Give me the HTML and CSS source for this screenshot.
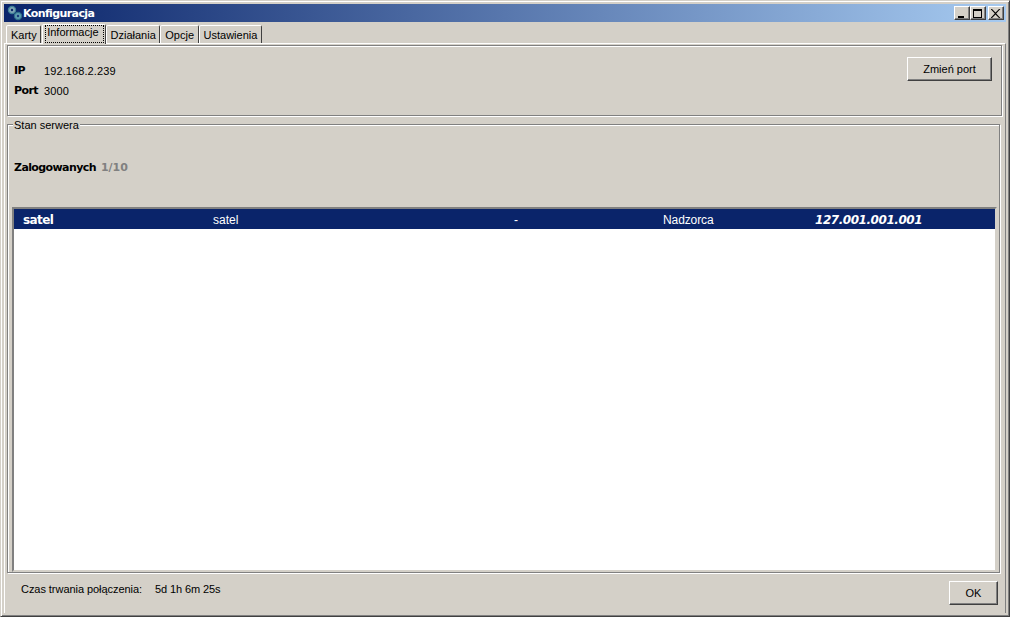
FILE: index.html
```html
<!DOCTYPE html>
<html lang="pl">
<head>
<meta charset="utf-8">
<title>Konfiguracja</title>
<link rel="stylesheet" href="styles.css">
</head>
<body>
<div class="window">
  <header class="titlebar">
    <svg class="appicon" width="16" height="16" viewBox="0 0 16 16">
      <circle cx="5" cy="5" r="3.6" fill="#7fa6b4" stroke="#3f7f96" stroke-width="1.2"/>
      <circle cx="5" cy="5" r="1.2" fill="#0a246a"/>
      <circle cx="11" cy="11" r="3.6" fill="#5d9db0" stroke="#2f6f8a" stroke-width="1.2"/>
      <circle cx="11" cy="11" r="1.2" fill="#1a3a7a"/>
    </svg>
    <span class="title">Konfiguracja</span>
    <div class="winbtns">
      <span class="winbtn"><svg width="10" height="9" viewBox="0 0 10 9"><rect x="1" y="7" width="6" height="2" fill="#000"/></svg></span>
      <span class="winbtn"><svg width="10" height="9" viewBox="0 0 10 9"><path d="M0 0h9v9H0zM1 2v6h7V2z" fill="#000" fill-rule="evenodd"/></svg></span>
      <span class="winbtn close"><svg width="10" height="9" viewBox="0 0 10 9"><path d="M1 0l3.5 3.5L8 0h1.4L5.2 4.5 9.4 9H8L4.5 5.5 1 9H-.4l4.2-4.5L-.4 0z" fill="#000"/></svg></span>
    </div>
  </header>
  <nav class="tabs">
    <span class="tab">Karty</span>
    <span class="tab active"><span class="focus">Informacje</span></span>
    <span class="tab">Działania</span>
    <span class="tab">Opcje</span>
    <span class="tab">Ustawienia</span>
  </nav>
  <main class="pane">
    <section class="info etched">
      <div class="info-grid">
        <b class="lbl">IP</b><span>192.168.2.239</span>
        <b class="lbl">Port</b><span>3000</span>
      </div>
      <button class="btn port">Zmień port</button>
    </section>
    <section class="group etched">
      <span class="legend">Stan serwera</span>
      <div class="logged"><b class="lbl">Zalogowanych</b><b class="count">1/10</b></div>
      <div class="list">
        <div class="row">
          <b class="c1">satel</b>
          <span class="c2">satel</span>
          <span class="c3">-</span>
          <span class="c4">Nadzorca</span>
          <b class="c5">127.001.001.001</b>
        </div>
      </div>
    </section>
    <footer class="foot">
      <span class="foot-l">Czas trwania połączenia:</span>
      <span class="foot-v">5d 1h 6m 25s</span>
      <button class="btn ok">OK</button>
    </footer>
  </main>
</div>
</body>
</html>
```
FILE: styles.css
```css
html, body { margin: 0; padding: 0; background: #fff; }
body { width: 1010px; height: 620px; overflow: hidden; font: 11px "Liberation Sans", Arial, sans-serif; color: #000; }
* { box-sizing: border-box; }

.window {
  width: 1010px; height: 617px;
  background: #d4d0c8;
  padding: 3px;
  border: 1px solid;
  border-color: #d4d0c8 #404040 #404040 #d4d0c8;
  box-shadow: inset 1px 1px 0 #fff, inset -1px -1px 0 #808080;
  display: flex; flex-direction: column;
}
.titlebar {
  height: 18px; flex: none;
  background: linear-gradient(90deg, #0a246a, #a6caf0);
  display: flex; align-items: center;
  padding: 0 2px 0 3px;
  color: #fff;
}
.appicon { flex: none; }
.title { font: bold 11px "DejaVu Sans", Verdana, sans-serif; margin-left: 0; letter-spacing: -0.6px; }
.winbtns { margin-left: auto; display: flex; }
.winbtn {
  width: 16px; height: 14px; background: #d4d0c8;
  border: 1px solid; border-color: #fff #404040 #404040 #fff;
  box-shadow: inset -1px -1px 0 #808080;
  display: flex; align-items: center; justify-content: center;
}
.close { margin-left: 2px; }

.tabs { display: flex; align-items: flex-end; height: 21px; flex: none; padding-left: 2px; position: relative; z-index: 1; }
.tab {
  height: 18px; padding: 3px 3.5px 0 4px;
  border: 1px solid; border-bottom: 0;
  border-color: #fff #404040 transparent #fff;
  border-radius: 2px 2px 0 0;
  background: #d4d0c8;
  line-height: 13px; color: #000;
}
.tab.active { height: 20px; padding: 1px 2px 0 3px; margin-bottom: -1px; margin-left: 1px; }
.focus { display: block; outline: 1px dotted #000; padding: 0 4px 2px 1px; height: 16px; }

.pane {
  flex: 1; display: flex; flex-direction: column;
  border-top: 1px solid #fff; border-left: 1px solid #fff;
  border-right: 1px solid #808080;
  padding: 1px 3px 0 2px;
  min-height: 0;
}
.etched { border: 1px solid #808080; box-shadow: 1px 1px 0 #fff, inset 1px 1px 0 #fff; }

.info { height: 71px; flex: none; display: flex; justify-content: space-between; padding: 11px 9px 0 6px; }
.info-grid { display: grid; grid-template-columns: 30px auto; row-gap: 7px; margin-top: 7px; line-height: 13px; align-content: start; }
.lbl { font: bold 11px "DejaVu Sans", Verdana, sans-serif; letter-spacing: -0.6px; line-height: 13px; }
.info-grid span { letter-spacing: 0.1px; position: relative; top: 1px; }

.btn {
  font: 11px "Liberation Sans", Arial, sans-serif;
  background: #d4d0c8; color: #000; padding: 0;
  border: 1px solid; border-color: #fff #404040 #404040 #fff;
  box-shadow: inset -1px -1px 0 #808080;
}
.port { width: 85px; height: 24px; }

.group { height: 449px; flex: none; margin-top: 8px; margin-right: 2px; padding: 0 2px 0 4px; position: relative; display: flex; flex-direction: column; }
.legend { position: absolute; left: 5px; top: -6px; background: #d4d0c8; padding: 0 1px; line-height: 13px; letter-spacing: 0; }
.logged { margin: 36px 0 0 2px; display: flex; gap: 5px; height: 13px; }
.count { font: bold 11px "DejaVu Sans", Verdana, sans-serif; color: #808080; line-height: 13px; }
.list {
  margin-top: 33px; flex: 1; background: #fff;
  border: 2px solid; border-color: #808080 #d4d0c8 #d4d0c8 #808080;
  box-shadow: inset 0 1px 0 #404040;
  min-height: 0;
}
.row {
  height: 20px; background: #0a246a; color: #fff;
  line-height: 22px;
  display: grid; grid-template-columns: 190px 301px 146px 152px auto; padding-left: 9px;
}
.c1 { font: bold 12px/22px "DejaVu Sans", Verdana, sans-serif; letter-spacing: -0.6px; }
.c2, .c3, .c4 { font-size: 12px; }
.c4 { padding-left: 3px; letter-spacing: -0.1px; }
.c5 { font: italic bold 12px/22px "DejaVu Sans", Verdana, sans-serif; letter-spacing: -0.45px; padding-left: 3px; }

.foot { flex: 1; display: flex; align-items: flex-start; padding-left: 14px; min-height: 0; }
.foot-l { margin-top: 10px; width: 134px; letter-spacing: -0.05px; }
.foot-v { margin-top: 10px; letter-spacing: -0.1px; }
.ok { margin-left: auto; margin-top: 8px; margin-right: 4px; width: 49px; height: 24px; }
```
